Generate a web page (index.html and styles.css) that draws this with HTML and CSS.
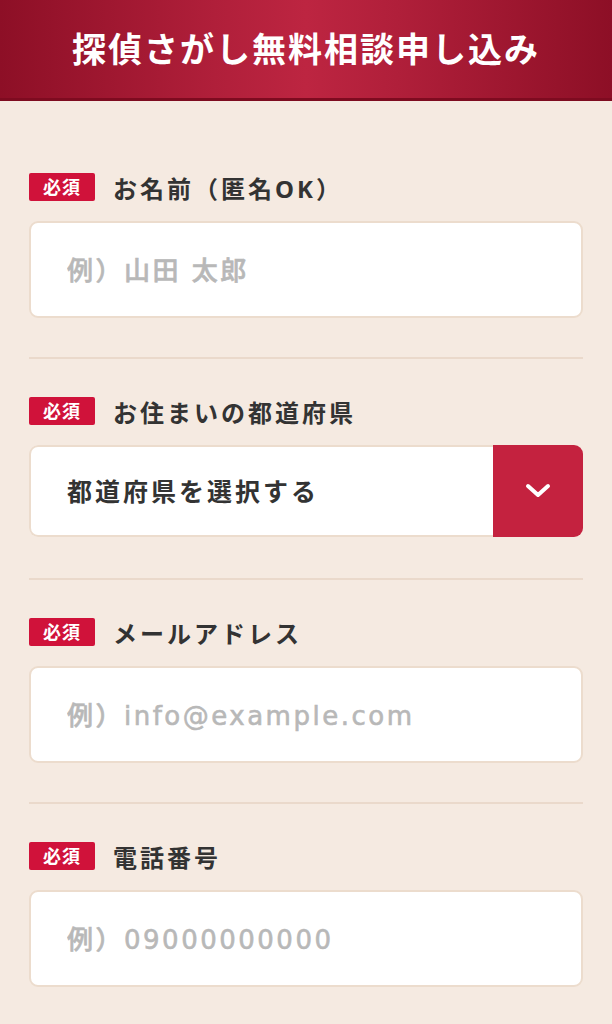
FILE: index.html
```html
<!DOCTYPE HTML>
<html lang="ja">
<head>
    <meta charset="UTF-8">
    <title>探偵さがし無料相談申し込み</title>
    <link rel="stylesheet" href="styles.css">
</head>
<body>
    <h1 class="title">探偵さがし無料相談申し込み</h1>

    <form class="form">
        <div class="field">
            <p class="label"><span class="req">必須</span>お名前（匿名OK）</p>
            <input type="text" class="text" placeholder="例）山田 太郎" />
        </div>

        <div class="field field-select">
            <p class="label"><span class="req">必須</span>お住まいの都道府県</p>
            <div class="select">
                <select name="pref">
                    <option value="">都道府県を選択する</option>
                    <option value="tokyo">東京都</option>
                    <option value="osaka">大阪府</option>
                </select>
                <span class="arrow">
                    <svg width="26" height="16" viewBox="0 0 26 16">
                        <path d="M3 3 L13 12 L23 3" fill="none" stroke="#fff" stroke-width="4" stroke-linecap="round" stroke-linejoin="round" />
                    </svg>
                </span>
            </div>
        </div>

        <div class="field">
            <p class="label"><span class="req">必須</span>メールアドレス</p>
            <input type="email" class="text" placeholder="例）info@example.com" />
        </div>

        <div class="field">
            <p class="label"><span class="req">必須</span>電話番号</p>
            <input type="tel" class="text" placeholder="例）09000000000" />
        </div>
    </form>
</body>
</html>
```

FILE: styles.css
```css
body {
    margin: 0;
    background: #f5eae1;
    font-family: "Noto Sans", "Noto Sans CJK JP", sans-serif;
    color: #333;
}

.title {
    margin: 0;
    height: 98px;
    line-height: 98px;
    border-bottom: 3px solid #7e0b20;
    background: linear-gradient(to right, #8d0f26 0%, #b01f3a 35%, #bd2541 50%, #b01f3a 65%, #8d0f26 100%);
    color: #fff;
    font-size: 34px;
    font-weight: 700;
    letter-spacing: 2px;
    text-align: center;
}

.form {
    padding: 0 29px;
}

.field {
    padding: 38px 0 39px;
    border-bottom: 2px solid #ead9cb;
}
.field:first-child {
    padding-top: 72px;
}
.field-select {
    padding-bottom: 41px;
}

.label {
    display: flex;
    align-items: center;
    margin: 0 0 20px;
    height: 28px;
    font-size: 24px;
    font-weight: 700;
    letter-spacing: 3px;
}

.req {
    display: inline-block;
    width: 66px;
    height: 28px;
    margin-right: 18px;
    border-radius: 2px;
    background: #d0123a;
    color: #fff;
    font-size: 18px;
    line-height: 28px;
    letter-spacing: 1px;
    text-align: center;
}

.text {
    display: block;
    box-sizing: border-box;
    width: 100%;
    height: 97px;
    margin: 0;
    padding: 2px 20px 0 36px;
    border: 2px solid #ecdccd;
    border-radius: 9px;
    background: #fff;
    font-family: "DejaVu Sans", "Noto Sans CJK JP", sans-serif;
    font-size: 26px;
    font-weight: 500;
    letter-spacing: 2.5px;
    color: #333;
    outline: none;
}
.text::placeholder {
    color: #b8b8b8;
    -webkit-text-stroke: 0.6px #b8b8b8;
}

.select {
    display: flex;
    height: 92px;
    border-radius: 9px;
    overflow: hidden;
}
.select select {
    flex: 1;
    margin: 0;
    padding: 0 0 0 36px;
    border: 2px solid #ecdccd;
    border-right: 0;
    border-radius: 9px 0 0 9px;
    background: #fff;
    -webkit-appearance: none;
    appearance: none;
    font-family: inherit;
    font-size: 25px;
    font-weight: 700;
    letter-spacing: 3px;
    color: #333;
    outline: none;
}
.arrow {
    display: flex;
    align-items: center;
    justify-content: center;
    width: 90px;
    background: #c4223f;
}
```
